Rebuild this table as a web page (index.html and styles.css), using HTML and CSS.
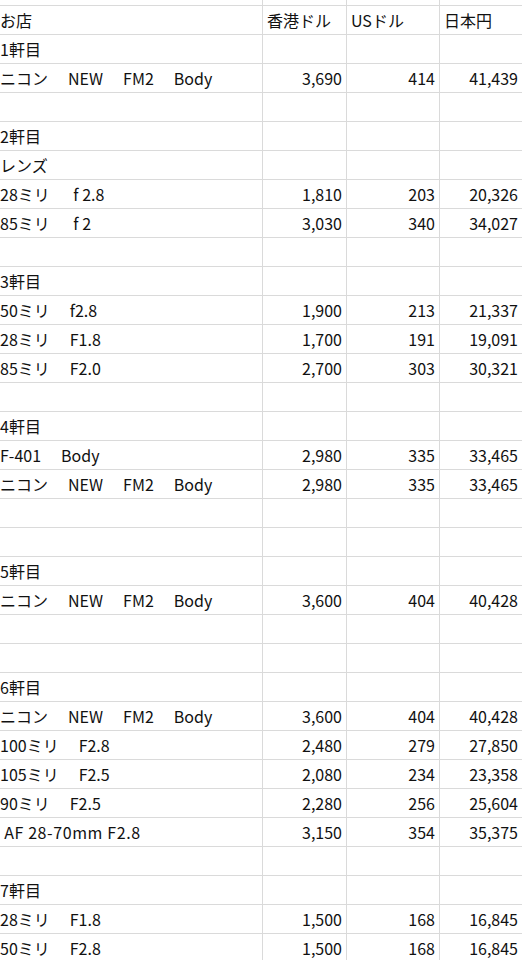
FILE: index.html
```html
<!DOCTYPE html>
<html lang="ja">
<head>
<meta charset="utf-8">
<title>Sheet</title>
<link rel="stylesheet" href="styles.css">
</head>
<body>
<div class="sheet">
  <div class="row top"><div class="c"></div><div class="c"></div><div class="c"></div><div class="c"></div></div>
  <div class="row"><div class="c">お店</div><div class="c h">香港ドル</div><div class="c h">USドル</div><div class="c h">日本円</div></div>
  <div class="row"><div class="c">1軒目</div><div class="c"></div><div class="c"></div><div class="c"></div></div>
  <div class="row"><div class="c">ニコン<span class="sp">　</span>NEW<span class="sp">　</span>FM2<span class="sp">　</span>Body</div><div class="c n">3,690</div><div class="c n">414</div><div class="c n">41,439</div></div>
  <div class="row"><div class="c"></div><div class="c"></div><div class="c"></div><div class="c"></div></div>
  <div class="row"><div class="c">2軒目</div><div class="c"></div><div class="c"></div><div class="c"></div></div>
  <div class="row"><div class="c">レンズ</div><div class="c"></div><div class="c"></div><div class="c"></div></div>
  <div class="row"><div class="c">28ミリ<span class="sp">　</span> f 2.8</div><div class="c n">1,810</div><div class="c n">203</div><div class="c n">20,326</div></div>
  <div class="row"><div class="c">85ミリ<span class="sp">　</span> f 2</div><div class="c n">3,030</div><div class="c n">340</div><div class="c n">34,027</div></div>
  <div class="row"><div class="c"></div><div class="c"></div><div class="c"></div><div class="c"></div></div>
  <div class="row"><div class="c">3軒目</div><div class="c"></div><div class="c"></div><div class="c"></div></div>
  <div class="row"><div class="c">50ミリ<span class="sp">　</span>f2.8</div><div class="c n">1,900</div><div class="c n">213</div><div class="c n">21,337</div></div>
  <div class="row"><div class="c">28ミリ<span class="sp">　</span>F1.8</div><div class="c n">1,700</div><div class="c n">191</div><div class="c n">19,091</div></div>
  <div class="row"><div class="c">85ミリ<span class="sp">　</span>F2.0</div><div class="c n">2,700</div><div class="c n">303</div><div class="c n">30,321</div></div>
  <div class="row"><div class="c"></div><div class="c"></div><div class="c"></div><div class="c"></div></div>
  <div class="row"><div class="c">4軒目</div><div class="c"></div><div class="c"></div><div class="c"></div></div>
  <div class="row"><div class="c">F-401<span class="sp">　</span>Body</div><div class="c n">2,980</div><div class="c n">335</div><div class="c n">33,465</div></div>
  <div class="row"><div class="c">ニコン<span class="sp">　</span>NEW<span class="sp">　</span>FM2<span class="sp">　</span>Body</div><div class="c n">2,980</div><div class="c n">335</div><div class="c n">33,465</div></div>
  <div class="row"><div class="c"></div><div class="c"></div><div class="c"></div><div class="c"></div></div>
  <div class="row"><div class="c"></div><div class="c"></div><div class="c"></div><div class="c"></div></div>
  <div class="row"><div class="c">5軒目</div><div class="c"></div><div class="c"></div><div class="c"></div></div>
  <div class="row"><div class="c">ニコン<span class="sp">　</span>NEW<span class="sp">　</span>FM2<span class="sp">　</span>Body</div><div class="c n">3,600</div><div class="c n">404</div><div class="c n">40,428</div></div>
  <div class="row"><div class="c"></div><div class="c"></div><div class="c"></div><div class="c"></div></div>
  <div class="row"><div class="c"></div><div class="c"></div><div class="c"></div><div class="c"></div></div>
  <div class="row"><div class="c">6軒目</div><div class="c"></div><div class="c"></div><div class="c"></div></div>
  <div class="row"><div class="c">ニコン<span class="sp">　</span>NEW<span class="sp">　</span>FM2<span class="sp">　</span>Body</div><div class="c n">3,600</div><div class="c n">404</div><div class="c n">40,428</div></div>
  <div class="row"><div class="c">100ミリ<span class="sp">　</span>F2.8</div><div class="c n">2,480</div><div class="c n">279</div><div class="c n">27,850</div></div>
  <div class="row"><div class="c">105ミリ<span class="sp">　</span>F2.5</div><div class="c n">2,080</div><div class="c n">234</div><div class="c n">23,358</div></div>
  <div class="row"><div class="c">90ミリ<span class="sp">　</span>F2.5</div><div class="c n">2,280</div><div class="c n">256</div><div class="c n">25,604</div></div>
  <div class="row"><div class="c"><span class="lat"> AF 28-70mm F2.8</span></div><div class="c n">3,150</div><div class="c n">354</div><div class="c n">35,375</div></div>
  <div class="row"><div class="c"></div><div class="c"></div><div class="c"></div><div class="c"></div></div>
  <div class="row"><div class="c">7軒目</div><div class="c"></div><div class="c"></div><div class="c"></div></div>
  <div class="row"><div class="c">28ミリ<span class="sp">　</span>F1.8</div><div class="c n">1,500</div><div class="c n">168</div><div class="c n">16,845</div></div>
  <div class="row"><div class="c">50ミリ<span class="sp">　</span>F2.8</div><div class="c n">1,500</div><div class="c n">168</div><div class="c n">16,845</div></div>
</div>
</body>
</html>
```

FILE: styles.css
```css
html, body {
  margin: 0;
  padding: 0;
  background: #ffffff;
}
body {
  font-family: "Noto Sans CJK JP", "Noto Sans", sans-serif;
  font-size: 16px;
  color: #111111;
  overflow: hidden;
}
.sheet {
  width: 522px;
}
.row {
  display: grid;
  grid-template-columns: 263px 84px 93px 82px;
  height: 29px;
  box-sizing: border-box;
  border-bottom: 1px solid #dadada;
}
.row.top {
  height: 6px;
}
.c {
  display: flex;
  align-items: center;
  white-space: pre;
  overflow: hidden;
  box-sizing: border-box;
  border-right: 1px solid #dadada;
  padding: 0 4px 1px 0;
  line-height: 1;
}
.c:first-child {
  padding-left: 0;
}
.c:last-child {
  border-right: none;
}
.c.h {
  padding-left: 4px;
}
.c.n {
  justify-content: flex-end;
}
.sp {
  display: inline-block;
  width: 20px;
}
.lat {
  letter-spacing: 0.6px;
}
```
